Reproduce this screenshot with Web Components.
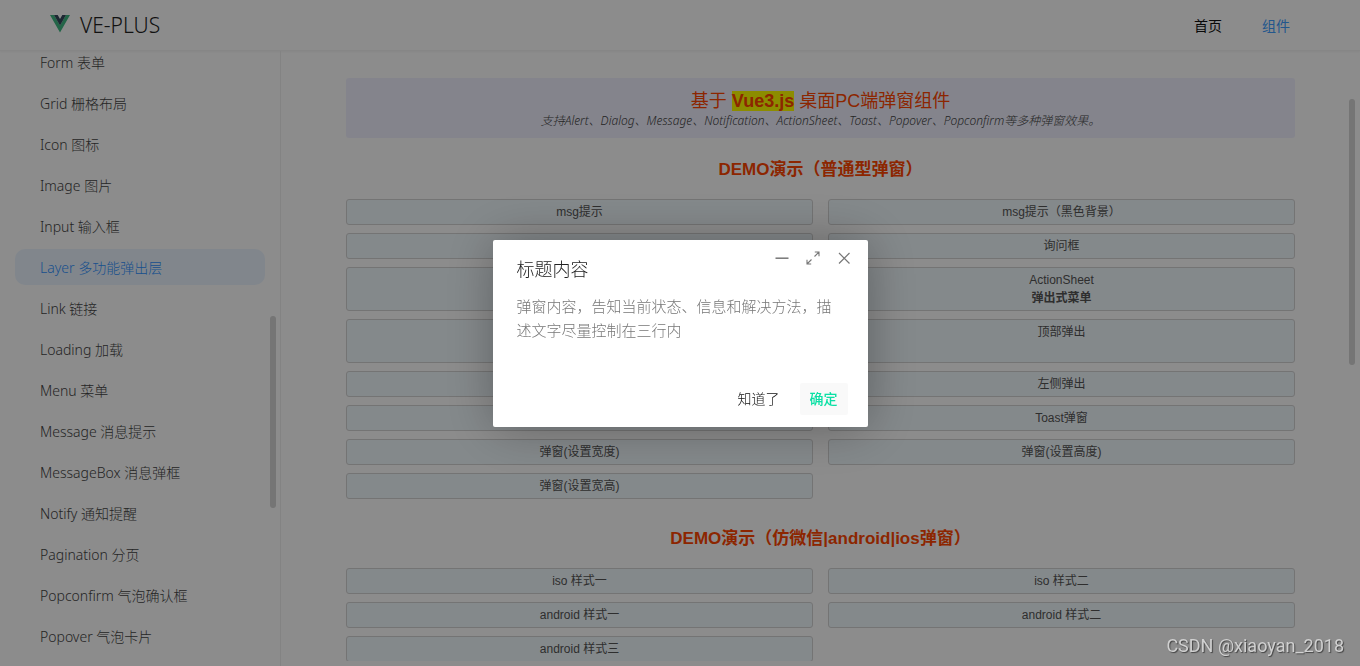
<!DOCTYPE html>
<html lang="zh-CN">
<head>
<meta charset="utf-8">
<title>VE-PLUS</title>
<style>
html, body { margin: 0; height: 100%; }
body {
  font-family: "Noto Sans", "Noto Sans CJK SC", sans-serif;
  font-size: 14px; color: #333; background: #fff; overflow: hidden;
}
mark { background: #ff0; color: #ff4500; font-weight: 700; }
</style>
</head>
<body>
<ve-app>
  <ve-header slot="header">
    <ve-nav-link>首页</ve-nav-link>
    <ve-nav-link active>组件</ve-nav-link>
  </ve-header>
  <ve-sidebar slot="aside">
    <ve-menu-item>Form 表单</ve-menu-item>
    <ve-menu-item>Grid 栅格布局</ve-menu-item>
    <ve-menu-item>Icon 图标</ve-menu-item>
    <ve-menu-item>Image 图片</ve-menu-item>
    <ve-menu-item>Input 输入框</ve-menu-item>
    <ve-menu-item active>Layer 多功能弹出层</ve-menu-item>
    <ve-menu-item>Link 链接</ve-menu-item>
    <ve-menu-item>Loading 加载</ve-menu-item>
    <ve-menu-item>Menu 菜单</ve-menu-item>
    <ve-menu-item>Message 消息提示</ve-menu-item>
    <ve-menu-item>MessageBox 消息弹框</ve-menu-item>
    <ve-menu-item>Notify 通知提醒</ve-menu-item>
    <ve-menu-item>Pagination 分页</ve-menu-item>
    <ve-menu-item>Popconfirm 气泡确认框</ve-menu-item>
    <ve-menu-item>Popover 气泡卡片</ve-menu-item>
  </ve-sidebar>
  <ve-banner>
    <span slot="title">基于 <mark>Vue3.js</mark> 桌面PC端弹窗组件</span>
    支持Alert、Dialog、Message、Notification、ActionSheet、Toast、Popover、Popconfirm等多种弹窗效果。
  </ve-banner>
  <ve-demo>
    <span slot="title">DEMO演示（普通型弹窗）</span>
    <ve-button>msg提示</ve-button>
    <ve-button>msg提示（黑色背景）</ve-button>
    <ve-button></ve-button>
    <ve-button>询问框</ve-button>
    <ve-button></ve-button>
    <ve-button>ActionSheet<br><b>弹出式菜单</b></ve-button>
    <ve-button lines="2"></ve-button>
    <ve-button>顶部弹出</ve-button>
    <ve-button></ve-button>
    <ve-button>左侧弹出</ve-button>
    <ve-button></ve-button>
    <ve-button>Toast弹窗</ve-button>
    <ve-button>弹窗(设置宽度)</ve-button>
    <ve-button>弹窗(设置高度)</ve-button>
    <ve-button>弹窗(设置宽高)</ve-button>
  </ve-demo>
  <ve-demo>
    <span slot="title">DEMO演示（仿微信|android|ios弹窗）</span>
    <ve-button>iso 样式一</ve-button>
    <ve-button>iso 样式二</ve-button>
    <ve-button>android 样式一</ve-button>
    <ve-button>android 样式二</ve-button>
    <ve-button>android 样式三</ve-button>
  </ve-demo>
</ve-app>
<ve-dialog>
  <span slot="title">标题内容</span>
  弹窗内容，告知当前状态、信息和解决方法，描述文字尽量控制在三行内
  <ve-dialog-button slot="footer">知道了</ve-dialog-button>
  <ve-dialog-button slot="footer" primary>确定</ve-dialog-button>
</ve-dialog>
<ve-watermark>CSDN @xiaoyan_2018</ve-watermark>

<script>
function define(name, markup) {
  const template = document.createElement('template');
  template.innerHTML = markup;
  customElements.define(name, class extends HTMLElement {
    constructor() {
      super();
      this.attachShadow({ mode: 'open' }).append(template.content.cloneNode(true));
    }
  });
}

define('ve-app', `
<style>
:host { display: grid; grid-template: 51px minmax(0, 1fr) / 281px minmax(0, 1fr); height: 100vh; }
header { grid-column: 1 / -1; }
aside { min-height: 0; border-right: 1px solid #eee; box-sizing: border-box; }
main { position: relative; box-sizing: border-box; min-height: 0; padding-bottom: 5px; }
.view { height: 100%; box-sizing: border-box; overflow: hidden; padding: 27px 65px 0; }
</style>
<header><slot name="header"></slot></header>
<aside><slot name="aside"></slot></aside>
<main><div class="view"><slot></slot></div><ve-thumb style="--top: 48px; --length: 266px"></ve-thumb></main>`);

define('ve-thumb', `
<style>
:host { position: absolute; right: var(--right, 5px); top: var(--top); width: 6px; height: var(--length); border-radius: 3px; background: #d5d5d5; }
</style>`);

define('ve-header', `
<style>
:host { display: flex; align-items: center; justify-content: space-between; box-sizing: border-box; height: 51px; padding: 0 70px 0 50px; border-bottom: 1px solid #f4f4f4; box-shadow: 0 1px 2px #0000000d; }
.brand { display: flex; align-items: center; gap: 10px; color: #222; text-decoration: none; font: 300 21px/24px "Noto Sans", sans-serif; }
svg { display: block; margin-bottom: 2px; }
nav { display: flex; gap: 40px; padding-top: 2px; }
</style>
<a class="brand" href="#">
  <svg width="20" height="18" viewBox="0 0 20 18" aria-hidden="true">
    <path fill="#41b883" d="M0 0h4l6 10.400L16 0h4L10 17.500z"/>
    <path fill="#35495e" d="M4 0h3.700L10 4l2.300-4H16l-6 10.400z"/>
  </svg>
  <span>VE-PLUS</span>
</a>
<nav><slot></slot></nav>`);

define('ve-nav-link', `
<style>
:host { display: block; --c: #111; }
:host([active]) { --c: #409eff; }
a { color: var(--c); text-decoration: none; font-size: 14px; line-height: 20px; }
</style>
<a href="#"><slot></slot></a>`);

define('ve-sidebar', `
<style>
:host { display: block; position: relative; height: 100%; overflow: hidden; }
nav { display: flex; flex-direction: column; gap: 5px; margin-top: -7px; padding: 0 15px; }
</style>
<nav><slot></slot></nav>
<ve-thumb style="--top: 265px; --length: 192px; --right: 4px"></ve-thumb>`);

define('ve-menu-item', `
<style>
:host { display: block; --c: #444; --bg: transparent; }
:host([active]) { --c: #2f92ff; --bg: #ecf5ff; }
a { display: block; padding: 1px 25px 0; border-radius: 10px; background: var(--bg); color: var(--c); font-size: 14px; font-weight: 300; line-height: 35px; text-decoration: none; white-space: nowrap; }
</style>
<a href="#"><slot></slot></a>`);

define('ve-banner', `
<style>
:host { display: block; box-sizing: border-box; height: 60px; padding-top: 12px; border-radius: 3px; background: #f1f1ff; text-align: center; }
h1 { margin: 0; color: #ff4500; font: 400 18px/22px "Liberation Sans", "Noto Sans CJK SC", sans-serif; }
p { margin: 0; color: #444; font-size: 12px; font-weight: 300; font-style: italic; line-height: 18px; }
</style>
<h1><slot name="title"></slot></h1>
<p><slot></slot></p>`);

define('ve-demo', `
<style>
:host { display: block; padding-bottom: 8px; }
h2 { margin: 0; padding: 21px 0 18px; color: #ff4500; text-align: center; font: 700 17px/22px "Liberation Sans", "Noto Sans CJK SC", sans-serif; }
div { display: grid; grid-template-columns: 1fr 1fr; gap: 8px 15px; }
</style>
<h2><slot name="title"></slot></h2>
<div><slot></slot></div>`);

define('ve-button', `
<style>
:host { display: grid; }
button { display: flex; flex-direction: column; align-items: center; min-height: 26px; padding: 3px; border: 1px solid #d3d3d3; border-radius: 3px; background: #f1f9fd; color: #555; font: 12px/18px "Liberation Sans", "Noto Sans CJK SC", sans-serif; }
:host([lines="2"]) button { min-height: 44px; }
</style>
<button type="button"><span><slot></slot></span></button>`);

define('ve-dialog', `
<style>
:host { position: fixed; inset: 0; display: flex; align-items: center; justify-content: center; background: #00000073; }
section { position: relative; box-sizing: border-box; width: 375px; padding: 16px 20px 12px 24px; border-radius: 2px; background: #fff; box-shadow: 1px 1px 50px #0000004d; font-family: "Noto Sans CJK SC", sans-serif; }
h3 { margin: 0; color: #222; font-size: 18px; font-weight: 300; line-height: 24px; }
p { margin: 14px 4px 0 0; min-height: 89px; color: #777; font-size: 15px; font-weight: 300; line-height: 24px; }
footer { display: flex; justify-content: flex-end; gap: 10px; }
.tools { position: absolute; top: 10px; right: 16px; display: flex; gap: 15px; }
.tools button { display: block; width: 16px; height: 16px; padding: 0; border: 0; background: none; color: #777; }
svg { display: block; fill: none; stroke: currentColor; }
</style>
<section role="dialog" aria-modal="true" aria-labelledby="title">
  <h3 id="title"><slot name="title"></slot></h3>
  <div class="tools">
    <button type="button" aria-label="最小化"><svg width="16" height="16"><path stroke-width="1.500" d="M1.500 8.200h13"/></svg></button>
    <button type="button" aria-label="最大化"><svg width="16" height="16"><path stroke-width="1.100" d="M9.500 6.500l4.500-4.500M9.800 2h4.200v4.200M6.500 9.500l-4.500 4.500M2 9.800v4.200h4.200"/></svg></button>
    <button type="button" aria-label="关闭"><svg width="16" height="16"><path stroke-width="1.200" d="M3 3l10.500 10.500M13.500 3l-10.500 10.500"/></svg></button>
  </div>
  <p><slot></slot></p>
  <footer><slot name="footer"></slot></footer>
</section>`);

define('ve-dialog-button', `
<style>
:host { display: block; --c: #111; --bg: transparent; --w: 300; }
:host([primary]) { --c: #0be0a5; --bg: #f9f9f9; --w: 500; }
button { display: block; padding: 0 10px 2px; border: 0; border-radius: 2px; background: var(--bg); color: var(--c); font: var(--w) 14px/30px "Noto Sans CJK SC", sans-serif; }
</style>
<button type="button"><slot></slot></button>`);

define('ve-watermark', `
<style>
:host { position: fixed; right: 16px; bottom: 8px; color: #d0d0d0; font: 18px/24px Roboto, sans-serif; text-shadow: 1px 1px 1px #444; }
</style>
<slot></slot>`);
</script>
</body>
</html>
